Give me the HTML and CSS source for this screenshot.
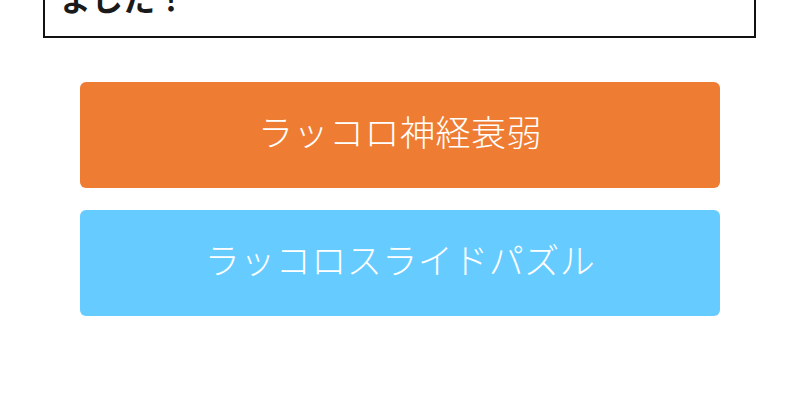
FILE: index.html
```html
<!DOCTYPE html>
<html lang="ja">
<head>
<meta charset="utf-8">
<link rel="stylesheet" href="styles.css">
</head>
<body>
<div class="page">
  <div class="notice">ラッコロのゲームをつくり<br>ました！</div>
  <div class="menu">
    <a class="btn btn-orange" href="#">ラッコロ神経衰弱</a>
    <a class="btn btn-blue" href="#">ラッコロスライドパズル</a>
  </div>
</div>
</body>
</html>
```
FILE: styles.css
```css
html, body {
  margin: 0;
  padding: 0;
  background: #ffffff;
  overflow: hidden;
}
.page {
  width: 800px;
  height: 418px;
  font-family: "Noto Sans CJK JP", "Noto Sans", sans-serif;
}
.notice {
  margin: -65px 44px 0 43px;
  border: 2px solid #111111;
  padding: 0 14px 19px 14px;
  font-size: 32px;
  font-weight: bold;
  line-height: 40px;
  color: #1a1a1a;
}
.menu {
  display: flex;
  flex-direction: column;
  gap: 22px;
  margin: 44px 80px 0 80px;
}
.btn {
  display: flex;
  align-items: center;
  justify-content: center;
  height: 106px;
  box-sizing: border-box;
  padding-bottom: 10px;
  border-radius: 6px;
  color: #ffffff;
  text-decoration: none;
  font-size: 35px;
  font-weight: 300;
  letter-spacing: 0.5px;
}
.btn-orange { background: #ee7d33; }
.btn-blue { background: #66ccff; }
```
